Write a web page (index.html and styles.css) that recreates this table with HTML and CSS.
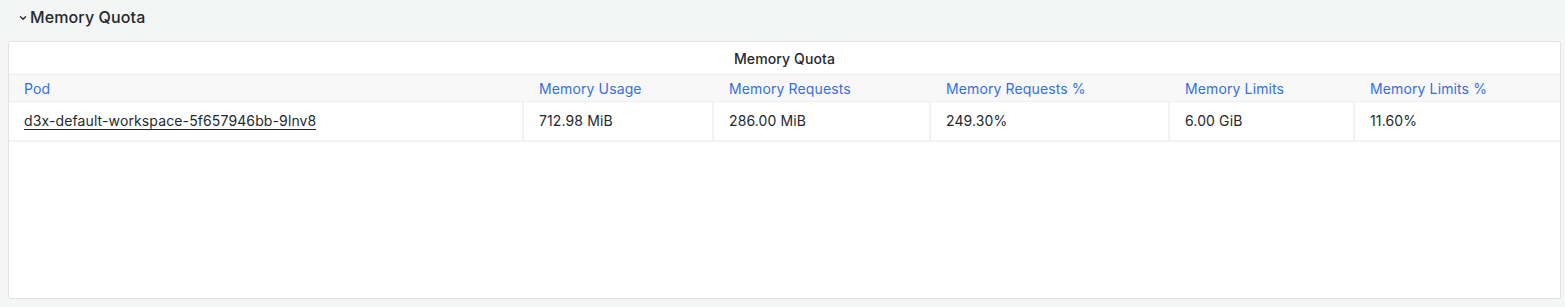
FILE: index.html
```html
<!DOCTYPE html>
<html>
<head>
<meta charset="utf-8">
<link rel="stylesheet" href="styles.css">
</head>
<body>
<div class="row-title">
  <svg class="chev" width="10" height="10" viewBox="0 0 10 10"><path d="M2.5 3.8 L5 6.3 L7.5 3.8" fill="none" stroke="#24292e" stroke-width="1.3" stroke-linecap="round" stroke-linejoin="round"/></svg>
  <span>Memory Quota</span>
</div>
<div class="panel">
  <div class="panel-title">Memory Quota</div>
  <div class="table">
    <div class="thead">
      <div class="c c1">Pod</div>
      <div class="c c2">Memory Usage</div>
      <div class="c c3">Memory Requests</div>
      <div class="c c4">Memory Requests %</div>
      <div class="c c5">Memory Limits</div>
      <div class="c c6">Memory Limits %</div>
    </div>
    <div class="trow">
      <div class="c c1"><a class="link">d3x-default-workspace-5f657946bb-9lnv8</a></div>
      <div class="c c2">712.98 MiB</div>
      <div class="c c3">286.00 MiB</div>
      <div class="c c4">249.30%</div>
      <div class="c c5">6.00 GiB</div>
      <div class="c c6">11.60%</div>
    </div>
  </div>
</div>
</body>
</html>
```
FILE: styles.css
```css
html, body {
  margin: 0;
  padding: 0;
  background: #f4f5f5;
  font-family: Inter, "Noto Sans", sans-serif;
  color: #24292e;
  letter-spacing: 0.12px;
}
body {
  padding: 0 4px 0 8px;
  height: 307px;
  box-sizing: border-box;
}
.row-title {
  display: flex;
  align-items: center;
  height: 34px;
  padding-left: 10px;
  gap: 2px;
  font-size: 16px;
  font-weight: 500;
}
.row-title .chev { margin-top: 2px; }
.panel {
  margin-top: 7px;
  height: 258px;
  box-sizing: border-box;
  background: #fff;
  border: 1px solid #e1e3e3;
  border-radius: 2px;
}
.panel-title {
  height: 32px;
  display: flex;
  align-items: center;
  justify-content: center;
  font-size: 14px;
  font-weight: 500;
  color: #24292e;
}
.thead, .trow {
  display: grid;
  grid-template-columns: 513px 190px 217px 239px 185px 1fr;
}
.thead {
  height: 26px;
  background: #f8f8f8;
  border-top: 1px solid #eff0f0;
  border-bottom: 1px solid #eff0f0;
  color: #3470df;
  font-size: 14px;
  font-weight: 400;
}
.thead .c {
  display: flex;
  align-items: center;
  padding-left: 15px;
  padding-top: 1px;
}
.thead .c2, .thead .c3, .thead .c4, .thead .c5, .thead .c6 { padding-left: 17px; }
.trow {
  height: 38px;
  border-bottom: 2px solid #f1f2f2;
  font-size: 14px;
}
.trow .c {
  display: flex;
  align-items: center;
  padding-left: 15px;
  border-left: 2px solid #f1f2f2;
  padding-bottom: 1px;
}
.trow .c1 { border-left: none; }
.trow .c2, .trow .c3, .trow .c4, .trow .c5, .trow .c6 { padding-left: 15px; }
.link {
  color: #24292e;
  text-decoration: none;
  border-bottom: 1px solid #24292e;
  line-height: 17px;
}
```
